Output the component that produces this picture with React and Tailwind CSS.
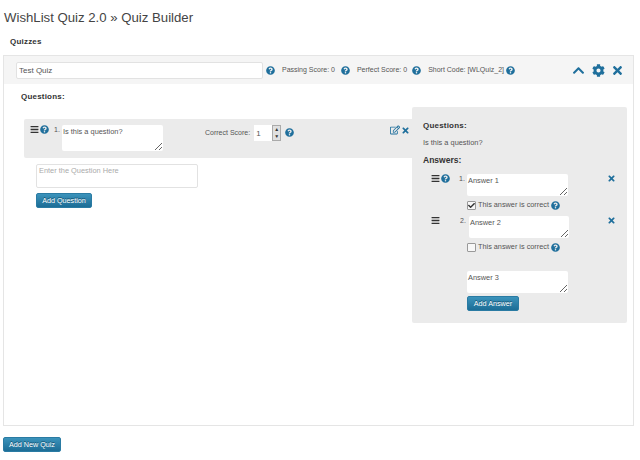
import { FaBars, FaChevronUp, FaCog, FaQuestionCircle, FaRegEdit, FaTimes, FaCheck } from "react-icons/fa";

function Help({ className = "" }) {
  return <FaQuestionCircle className={`text-[#1f6f9c] text-[9px] shrink-0 ${className}`} />;
}

function Box({ value, className = "" }) {
  return (
    <textarea
      readOnly
      defaultValue={value}
      className={`block w-[101px] h-[22px] bg-white rounded-[2px] px-[1px] py-[2px] text-[7.4px] leading-[10px] text-[#555] outline-none ${className}`}
    />
  );
}

function BlueButton({ children, className = "" }) {
  return (
    <button className={`block h-[15px] rounded-[2px] bg-gradient-to-b from-[#3b93bb] to-[#1c6d96] border border-[#2a7ba3] text-white text-[7.2px] leading-none text-center whitespace-nowrap [text-shadow:0_-1px_0_#12506f] ${className}`}>
      {children}
    </button>
  );
}

function Correct({ checked }) {
  return (
    <div className="flex items-center gap-[2px] mt-[3px] h-[12px] whitespace-nowrap">
      <span className="w-[9px] h-[9px] bg-[#f7f7f7] border border-[#999] rounded-[1px] flex items-center justify-center">
        {checked && <FaCheck className="text-[#333] text-[7px]" />}
      </span>
      <span className="text-[7.3px] text-[#555]">This answer is correct</span>
      <Help />
    </div>
  );
}

function AnswerRow({ n, value, checked, help, inset }) {
  return (
    <div className="flex h-[42px]">
      <div className="w-[28px] ml-[19px] flex items-start gap-[1px]">
        <FaBars className="text-[#333] text-[9px]" />
        {help && <Help />}
      </div>
      <div className={`w-[8px] text-[7px] text-[#555] ${inset ? "pl-[1px]" : ""}`}>{n}.</div>
      <div className="w-[104px]">
        <Box value={value} className={inset ? "ml-[2px] !w-[100px]" : ""} />
        <Correct checked={checked} />
      </div>
      <FaTimes className="text-[#1f6f9c] text-[9px] ml-auto mr-[11px]" />
    </div>
  );
}

export default function App() {
  return (
    <div className="w-[640px] h-[460px] bg-white overflow-hidden font-['Liberation_Sans',Arial,sans-serif] text-[#555]">
      <h1 className="pl-[4px] pt-[9px] text-[13.2px] leading-[18px] text-[#444]">WishList Quiz 2.0 » Quiz Builder</h1>
      <div className="pl-[10px] pt-[10px] text-[8px] leading-[10px] font-bold text-[#333] tracking-[0.2px]">Quizzes</div>

      <div className="mx-[3px] mt-[8px] w-[631px] h-[371px] border border-[#e5e5e5] flex flex-col">
        {/* quiz header */}
        <div className="h-[28px] bg-[#f5f5f5] flex items-center pl-[12px] text-[7px] whitespace-nowrap">
          <input
            readOnly
            defaultValue="Test Quiz"
            className="w-[247px] h-[17px] bg-white border border-[#e2e2e2] rounded-[2px] px-[2px] text-[8px] text-[#555] outline-none"
          />
          <Help className="ml-[3px]" />
          <span className="ml-[7px]">Passing Score: 0</span>
          <Help className="ml-[6px]" />
          <span className="ml-[7px]">Perfect Score: 0</span>
          <Help className="ml-[5px]" />
          <span className="ml-[7px]">Short Code: [WLQuiz_2]</span>
          <Help className="ml-[2px]" />
          <FaChevronUp className="text-[#1f6f9c] text-[13px] ml-[57px]" />
          <FaCog className="text-[#1f6f9c] text-[13px] ml-[7px]" />
          <FaTimes className="text-[#1f6f9c] text-[13px] ml-[6px]" />
        </div>

        <div className="flex flex-1 items-start">
          {/* questions column */}
          <div className="w-[408px]">
            <div className="pl-[17px] pt-[8px] h-[35px] text-[8px] leading-[10px] font-bold text-[#333] tracking-[0.2px]">Questions:</div>
            <div className="ml-[20px] h-[39px] bg-[#ebebeb] rounded-l-[2px] flex pt-[6px] whitespace-nowrap">
              <FaBars className="ml-[6px] text-[#333] text-[9px]" />
              <Help className="ml-[1px]" />
              <span className="ml-[5px] w-[8px] text-[7px] text-[#555]">1.</span>
              <Box value="Is this a question?" className="!h-[26px]" />
              <span className="ml-[42px] mt-[3px] text-[7px] text-[#555]">Correct Score:</span>
              <div className="ml-[4px] w-[27px] h-[16px] bg-white text-[8px] pl-[2px] pt-[3px] relative">
                1
                <div className="absolute right-0 top-0 w-[9px] h-[16px] bg-[#e0e0e0] border border-[#aaa] flex flex-col items-center text-[5px] leading-[7px] text-[#333]">
                  <span>▲</span>
                  <span>▼</span>
                </div>
              </div>
              <Help className="ml-[4px] mt-[3px]" />
              <FaRegEdit className="ml-[96px] text-[#1f6f9c] text-[10px]" />
              <FaTimes className="ml-[1px] mt-[1px] text-[#1f6f9c] text-[9px]" />
            </div>
            <div className="ml-[32px] mt-[6px]">
              <textarea
                readOnly
                placeholder="Enter the Question Here"
                className="block w-[162px] h-[24px] resize-none bg-white border border-[#e2e2e2] rounded-[2px] px-[2px] py-[1px] text-[7.4px] leading-[10px] outline-none placeholder:text-[#aaa]"
              />
              <BlueButton className="w-[56px] mt-[5px]">Add Question</BlueButton>
            </div>
          </div>

          {/* answers panel */}
          <div className="w-[215px] h-[216px] mt-[23px] bg-[#ebebeb] rounded-[2px]">
            <div className="pl-[11px] pt-[14px] text-[8px] leading-[10px] font-bold text-[#333] tracking-[0.2px]">Questions:</div>
            <div className="pl-[11px] pt-[7px] text-[7.4px] leading-[10px] text-[#555]">Is this a question?</div>
            <div className="pl-[11px] pt-[7px] text-[8.5px] leading-[10px] font-bold text-[#333]">Answers:</div>
            <div className="mt-[9px]">
              <AnswerRow n={1} value="Answer 1" checked help />
              <AnswerRow n={2} value="Answer 2" inset />
            </div>
            <div className="ml-[55px] mt-[13px]">
              <Box value="Answer 3" />
              <BlueButton className="w-[52px] mt-[3px]">Add Answer</BlueButton>
            </div>
          </div>
        </div>
      </div>

      <BlueButton className="ml-[3px] mt-[11px] w-[58px]">Add New Quiz</BlueButton>
    </div>
  );
}
